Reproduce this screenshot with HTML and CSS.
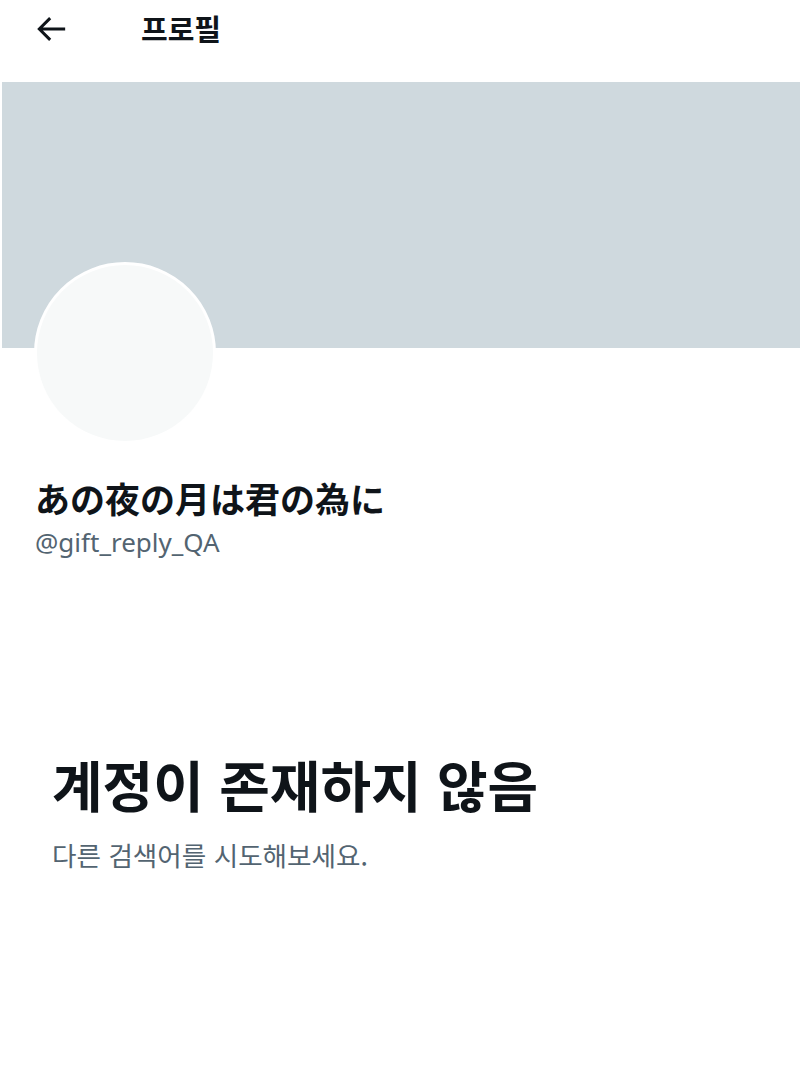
FILE: index.html
```html
<!DOCTYPE html>
<html lang="ko">
<head>
  <meta charset="UTF-8">
  <meta name="viewport" content="width=device-width, initial-scale=1.0">
  <title>프로필</title>
  <link rel="stylesheet" href="styles.css">
</head>
<body>
  <div class="header">
    <button class="back" aria-label="뒤로">
      <svg width="40" height="40" viewBox="0 0 24 24"><path d="M20.5 12H5M11.5 5.5L5 12l6.5 6.5" fill="none" stroke="#0f1419" stroke-width="1.8"/></svg>
    </button>
    <h2 class="title">프로필</h2>
  </div>

  <div class="banner"></div>

  <div class="profile">
    <div class="avatar"></div>
    <div class="name">あの夜の月は君の為に</div>
    <div class="handle">@gift_reply_QA</div>
  </div>

  <div class="empty">
    <div class="empty-title">계정이 존재하지 않음</div>
    <div class="empty-text">다른 검색어를 시도해보세요.</div>
  </div>
</body>
</html>
```

FILE: styles.css
```css
body {
  margin: 0;
  font-family: "Noto Sans", "Noto Sans CJK KR", "Noto Sans CJK JP", sans-serif;
  background: #ffffff;
  color: #0f1419;
}
.header {
  display: flex;
  align-items: center;
  height: 58px;
  padding: 0 0 0 29px;
}
.back {
  border: none;
  background: none;
  padding: 0;
  width: 44px;
  height: 44px;
  display: flex;
  align-items: center;
  justify-content: center;
  cursor: pointer;
}
.title {
  margin: -2px 0 0 68px;
  font-size: 29px;
  font-weight: 700;
  font-family: "Noto Sans CJK KR", sans-serif;
}
.banner {
  margin-top: 24px;
  margin-left: 2px;
  height: 266px;
  background: #cfd9de;
}
.profile {
  padding: 0 35px;
}
.avatar {
  width: 176px;
  height: 176px;
  margin-top: -86px;
  border-radius: 50%;
  background: #f7f9f9;
  border: 3px solid #ffffff;
  margin-left: -1px;
}
.name {
  margin-top: 30px;
  font-size: 35px;
  font-weight: 700;
  font-family: "Noto Sans CJK JP", sans-serif;
  line-height: 48px;
}
.handle {
  margin-top: 3px;
  font-size: 26px;
  color: #536471;
  line-height: 34px;
}
.empty {
  padding: 192px 52px 0;
}
.empty-title {
  font-size: 55px;
  font-weight: 700;
  font-family: "Noto Sans CJK KR", sans-serif;
  line-height: 64px;
}
.empty-text {
  margin-top: 23px;
  font-size: 26.6px;
  color: #536471;
  font-family: "Noto Sans CJK KR", sans-serif;
  line-height: 34px;
}
```
